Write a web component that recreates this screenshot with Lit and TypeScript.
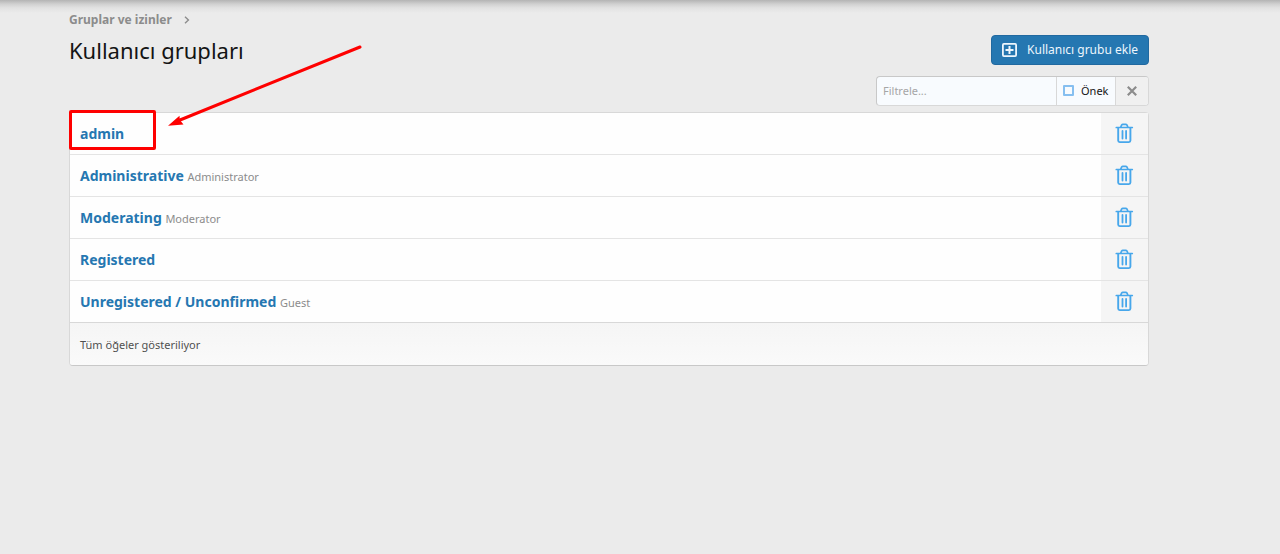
import { LitElement, html, css, nothing } from "lit";
import { customElement, state } from "lit/decorators.js";

interface Group {
  name: string;
  banner?: string;
}

const GROUPS: Group[] = [
  { name: "admin" },
  { name: "Administrative", banner: "Administrator" },
  { name: "Moderating", banner: "Moderator" },
  { name: "Registered" },
  { name: "Unregistered / Unconfirmed", banner: "Guest" },
];

@customElement("app-root")
export class AppRoot extends LitElement {
  static styles = css`
    :host {
      display: block;
      box-sizing: border-box;
      min-height: 100vh;
      padding: 10px 131px 20px 69px;
      background: linear-gradient(#b4b4b4, #d0d0d0 4px, #e2e2e2 8px, #ebebeb 13px);
      color: #141414;
      font-family: "Noto Sans", "Open Sans", sans-serif;
      font-size: 14px;
      line-height: 20px;
    }
    *, *::before, *::after { box-sizing: border-box; }
    a { color: #2577b1; text-decoration: none; }
    .crumbs {
      display: flex;
      align-items: center;
      gap: 12px;
      height: 20px;
      font-size: 12px;
      font-weight: 700;
    }
    .crumbs a { color: #8c8c8c; }
    .header {
      display: flex;
      align-items: center;
      justify-content: space-between;
      height: 30px;
      margin-top: 5px;
    }
    h1 {
      margin: 0;
      font-size: 22px;
      font-weight: 400;
      line-height: 30px;
    }
    .add {
      display: flex;
      align-items: center;
      gap: 10px;
      height: 30px;
      padding: 0 10px;
      border: 1px solid #2169a0;
      border-radius: 4px;
      background: #2577b1;
      color: #edf6fd;
      font: inherit;
      font-size: 12px;
    }
    .tools {
      display: flex;
      justify-content: flex-end;
      margin: 11px 0 6px;
    }
    .filter {
      display: flex;
      width: 273px;
      height: 30px;
      border: 1px solid #d8d8d8;
      border-top-color: #c8c8c8;
      border-left-color: #c8c8c8;
      border-radius: 4px;
      overflow: hidden;
      background: #f8fbfe;
      font-size: 11px;
    }
    .filter input[type="text"] {
      flex: 1;
      min-width: 0;
      padding: 0 6px;
      border: 0;
      outline: 0;
      background: transparent;
      color: #141414;
      font: inherit;
    }
    .filter input::placeholder { color: #a6a6a6; opacity: 1; }
    .prefix {
      display: flex;
      align-items: center;
      gap: 7px;
      width: 59px;
      padding: 0 6px;
      border-left: 1px solid #d8d8d8;
    }
    .prefix input {
      appearance: none;
      flex: none;
      width: 11px;
      height: 11px;
      margin: 0 0 2px;
      border: 2px solid #86bff0;
      border-radius: 1px;
    }
    .prefix input:checked { background: #47a7eb; }
    .clear {
      display: flex;
      align-items: center;
      justify-content: center;
      width: 33px;
      padding: 0;
      border: 0;
      border-left: 1px solid #d8d8d8;
      background: #f0f0f0;
    }
    .list {
      position: relative;
      border: 1px solid #d8d8d8;
      border-bottom-color: #c8c8c8;
      border-radius: 4px;
      background: #fefefe;
    }
    table {
      width: 100%;
      border-spacing: 0;
    }
    td {
      height: 42px;
      padding: 0 10px;
      border-bottom: 1px solid #e4e4e4;
    }
    tr:last-child td { border-bottom-color: #d8d8d8; }
    .name { font-weight: 700; }
    .banner { color: #8c8c8c; font-size: 11px; line-height: 16px; }
    .action {
      width: 47px;
      padding: 0;
      background: #f5f5f5;
      text-align: center;
    }
    .delete {
      display: inline-flex;
      padding: 0;
      border: 0;
      background: none;
      vertical-align: middle;
    }
    .footer {
      padding: 12px 10px 10px;
      border-radius: 0 0 3px 3px;
      background: linear-gradient(#f5f5f5, #fafafa);
      color: #505050;
      font-size: 11px;
    }
    .highlight {
      position: absolute;
      top: -3px;
      left: -1px;
      width: 87px;
      height: 40px;
      border: 3px solid #fe0000;
      border-radius: 2px;
      pointer-events: none;
    }
    .arrow {
      position: absolute;
      top: -73px;
      left: 94px;
      pointer-events: none;
    }
  `;

  @state() private query = "";
  @state() private prefixOnly = false;

  private get visibleGroups(): Group[] {
    const q = this.query.toLowerCase();
    return GROUPS.filter(({ name }) => {
      const n = name.toLowerCase();
      return this.prefixOnly ? n.startsWith(q) : n.includes(q);
    });
  }

  private trash() {
    return html`<svg width="19" height="22" viewBox="0 0 19 22" fill="none" stroke="#47a7eb" aria-hidden="true">
      <path d="M1.3 4.5H17.3" stroke-width="1.7" stroke-linecap="round"/>
      <path d="M3.2 4.5V17.6Q3.2 19.1 4.7 19.1H13.9Q15.4 19.1 15.4 17.6V4.5" stroke-width="1.9"/>
      <path d="M5.7 4.1L6.7 2Q7.1 1.4 7.8 1.4H10.8Q11.5 1.4 11.9 2L12.9 4.1" stroke-width="1.7"/>
      <path d="M7.5 8V15.5M11.1 8V15.5" stroke-width="1.8" stroke-linecap="round"/>
    </svg>`;
  }

  render() {
    return html`
      <nav class="crumbs">
        <a href="#">Gruplar ve izinler</a>
        <svg width="6" height="8" viewBox="0 0 6 8" fill="none" stroke="#8c8c8c" stroke-width="1.4" aria-hidden="true"><path d="M1 .8L4.4 4L1 7.2"/></svg>
      </nav>
      <header class="header">
        <h1>Kullanıcı grupları</h1>
        <button class="add" type="button">
          <svg width="15" height="14" viewBox="0 0 15 14" fill="none" stroke="#edf6fd" aria-hidden="true">
            <rect x=".9" y=".9" width="13.2" height="12.2" rx="1" stroke-width="1.8"/>
            <path d="M3.5 7H11.5M7.5 3V11" stroke-width="2"/>
          </svg>
          Kullanıcı grubu ekle
        </button>
      </header>
      <div class="tools">
        <div class="filter">
          <input type="text" aria-label="Filtrele" placeholder="Filtrele..." .value=${this.query}
            @input=${(e: Event) => (this.query = (e.target as HTMLInputElement).value)}>
          <label class="prefix">
            <input type="checkbox" .checked=${this.prefixOnly}
              @change=${(e: Event) => (this.prefixOnly = (e.target as HTMLInputElement).checked)}>
            Önek
          </label>
          <button class="clear" type="button" aria-label="Temizle" @click=${() => (this.query = "")}>
            <svg width="10" height="10" viewBox="0 0 10 10" stroke="#8c8c8c" stroke-width="2.2" aria-hidden="true"><path d="M.8 .8L9.2 9.2M9.2 .8L.8 9.2"/></svg>
          </button>
        </div>
      </div>
      <section class="list">
        <table>
          <tbody>
            ${this.visibleGroups.map((g) => html`
              <tr>
                <td>
                  <a class="name" href="#">${g.name}</a>
                  ${g.banner ? html`<span class="banner">${g.banner}</span>` : nothing}
                </td>
                <td class="action">
                  <button class="delete" type="button" aria-label="Sil">${this.trash()}</button>
                </td>
              </tr>`)}
          </tbody>
        </table>
        <div class="footer">Tüm öğeler gösteriliyor</div>
        <div class="highlight"></div>
        <svg class="arrow" width="204" height="90" viewBox="0 0 204 90" aria-hidden="true">
          <path d="M196 7L16 80" stroke="#fe0000" stroke-width="3" stroke-linecap="round"/>
          <path d="M4 85.7L15.5 75.8L15.8 80L19.5 84.5Z" fill="#fe0000"/>
        </svg>
      </section>
    `;
  }
}
